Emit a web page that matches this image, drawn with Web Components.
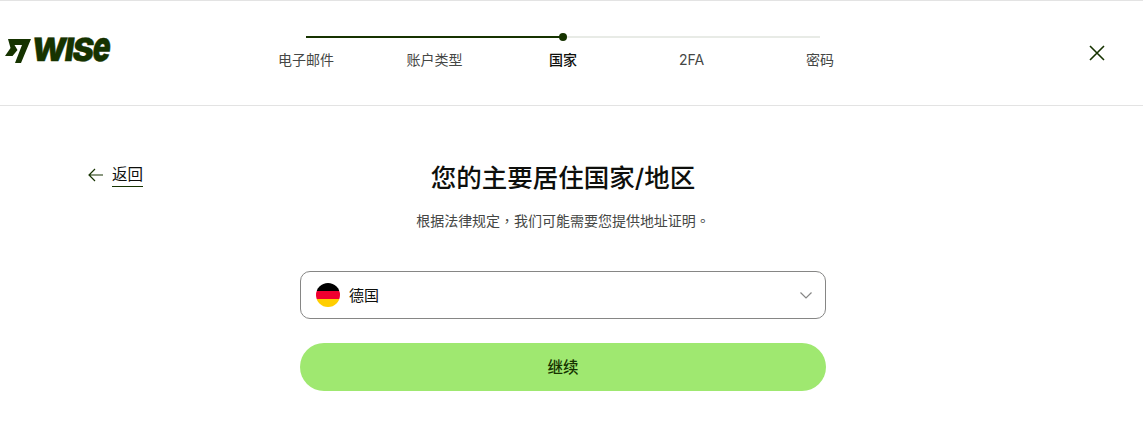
<!DOCTYPE html>
<html lang="zh-CN">
<head>
<meta charset="utf-8">
<title>Wise</title>
<style>
  html, body { margin: 0; background: #fff; }
  body {
    font-family: Inter, "Noto Sans CJK SC", sans-serif;
    color: #0e0f0c;
  }
</style>
</head>
<body>
<wise-page>
  <wise-header slot="header">
    <wise-stepper></wise-stepper>
  </wise-header>
  <back-link slot="back">返回</back-link>
  <h-title slot="title">您的主要居住国家/地区</h-title>
  <h-sub slot="sub" lang="zh-TW">根据法律规定，我们可能需要您提供地址证明。</h-sub>
  <country-select slot="form">德国</country-select>
  <green-button slot="form">继续</green-button>
</wise-page>

<script>
class WisePage extends HTMLElement {
  constructor() {
    super();
    this.attachShadow({ mode: 'open' }).innerHTML = `
      <style>
        :host { display: block; }
        .main {
          display: grid;
          grid-template-columns: 1fr 526px 1fr;
          padding: 55px 17px 48px 0;
        }
        .center { display: flex; flex-direction: column; align-items: center; }
        .form { width: 100%; display: flex; flex-direction: column; gap: 24px; margin-top: 39px; }
        .left { padding: 2px 0 0 88px; }
      </style>
      <slot name="header"></slot>
      <div class="main">
        <div class="left"><slot name="back"></slot></div>
        <div class="center">
          <slot name="title"></slot>
          <slot name="sub"></slot>
          <div class="form"><slot name="form"></slot></div>
        </div>
      </div>
    `;
  }
}

class WiseHeader extends HTMLElement {
  constructor() {
    super();
    this.attachShadow({ mode: 'open' }).innerHTML = `
      <style>
        :host {
          display: grid;
          grid-template-columns: 1fr 642.5px 1fr;
          height: 104px;
          padding-right: 17px;
          border-top: 1px solid #e3e3e3;
          border-bottom: 1px solid #e3e3e3;
        }
        .logo { display: flex; align-items: flex-start; gap: 1px; padding: 37px 0 0 5px; color: #163300; }
        .logo svg { flex: none; }
        .word {
          font: 900 32px/25px Inter, sans-serif;
          letter-spacing: -1.5px;
          height: 25px;
          display: flex;
          margin-top: -1px;
          transform: skewX(-8deg);
          -webkit-text-stroke: .4px #163300;
        }
        .word span { display: inline-block; transform-origin: 50% 100%; transform: scaleY(1.3) scaleX(.92); margin-left: -1px; }
        .close { display: flex; justify-content: flex-end; padding: 44px 21px 0 0; }
        .close svg { display: block; }
      </style>
      <div class="logo">
        <svg width="26" height="25" viewBox="0 0 26 25">
          <path fill="#163300" d="M3 1H26L16 25H10L17 7H9.5L12.5 12L7.5 18H0L5.5 10Z"/>
        </svg>
        <div class="word">WIS<span>e</span></div>
      </div>
      <slot></slot>
      <div class="close">
        <svg width="16" height="16" viewBox="0 0 16 16" fill="none" stroke="#163300" stroke-width="1.6">
          <path d="M1 1L15 15M15 1L1 15"/>
        </svg>
      </div>
    `;
  }
}

const STEPS = ['电子邮件', '账户类型', '国家', '2FA', '密码'];

class WiseStepper extends HTMLElement {
  constructor() {
    super();
    this.attachShadow({ mode: 'open' }).innerHTML = `
      <style>
        :host { display: block; padding-top: 35px; }
        .track {
          position: relative;
          height: 2px;
          margin: 0 64.25px;
          background: #e8ebe6;
        }
        .done { height: 2px; width: 50%; background: #163300; }
        .dot {
          position: absolute;
          left: 50%; top: 50%;
          width: 8px; height: 8px;
          margin: -4px 0 0 -4px;
          border-radius: 50%;
          background: #163300;
        }
        .labels {
          display: grid;
          grid-template-columns: repeat(5, 1fr);
          margin-top: 12px;
          font-size: 14px;
          line-height: 20px;
          color: #454745;
          text-align: center;
        }
        .on { color: #0e0f0c; font-weight: 500; }
      </style>
      <div class="track"><div class="done"></div><div class="dot"></div></div>
      <div class="labels">
        ${STEPS.map((s, i) => `<div class="${i === 2 ? 'on' : ''}">${s}</div>`).join('')}
      </div>
    `;
  }
}

class BackLink extends HTMLElement {
  constructor() {
    super();
    this.attachShadow({ mode: 'open' }).innerHTML = `
      <style>
        :host { display: inline-flex; align-items: center; gap: 9px; font-size: 15.5px; line-height: 22px; color: #163300; }
        span { display: block; border-bottom: 1px solid #163300; height: 22px; padding-top: 1px; color: #0e0f0c; }
        svg { display: block; }
      </style>
      <svg width="15" height="14" viewBox="0 0 15 14" fill="none" stroke="#163300" stroke-width="1.2">
        <path d="M15 7H1M7 1L1 7L7 13"/>
      </svg>
      <span><slot></slot></span>
    `;
  }
}

class HTitle extends HTMLElement {
  constructor() {
    super();
    this.attachShadow({ mode: 'open' }).innerHTML = `
      <style>
        :host { display: block; font-size: 25.5px; font-weight: 500; line-height: 34px; color: #0e0f0c; }
      </style>
      <slot></slot>
    `;
  }
}

class HSub extends HTMLElement {
  constructor() {
    super();
    this.attachShadow({ mode: 'open' }).innerHTML = `
      <style>
        :host {
          display: block;
          margin-top: 15px;
          font-family: Inter, "Noto Sans CJK TC", sans-serif;
          font-size: 14px;
          line-height: 22px;
          letter-spacing: -.02px;
          color: #454745;
        }
      </style>
      <slot></slot>
    `;
  }
}

class CountrySelect extends HTMLElement {
  constructor() {
    super();
    this.attachShadow({ mode: 'open' }).innerHTML = `
      <style>
        :host {
          display: flex;
          align-items: center;
          gap: 9px;
          box-sizing: border-box;
          height: 48px;
          padding: 0 13px 0 15px;
          border: 1px solid #868685;
          border-radius: 10px;
          font-size: 15px;
          color: #0e0f0c;
        }
        .flag { flex: none; display: block; }
        .name { flex: 1; margin-top: -2px; }
        .chev { display: block; }
      </style>
      <svg class="flag" width="24" height="24" viewBox="0 0 24 24">
        <defs><clipPath id="c"><circle cx="12" cy="12" r="12"/></clipPath></defs>
        <g clip-path="url(#c)">
          <rect width="24" height="8" fill="#000"/>
          <rect y="8" width="24" height="8" fill="#f0002f"/>
          <rect y="16" width="24" height="8" fill="#ffce00"/>
        </g>
      </svg>
      <div class="name"><slot></slot></div>
      <svg class="chev" width="12" height="7" viewBox="0 0 12 7" fill="none" stroke="#868685" stroke-width="1.2">
        <path d="M.5.5L6 6L11.5.5"/>
      </svg>
    `;
  }
}

class GreenButton extends HTMLElement {
  constructor() {
    super();
    this.attachShadow({ mode: 'open' }).innerHTML = `
      <style>
        :host {
          display: flex;
          align-items: center;
          justify-content: center;
          box-sizing: border-box;
          height: 48px;
          padding-bottom: 2px;
          border-radius: 24px;
          background: #9fe870;
          font-size: 15.5px;
          font-weight: 500;
          color: #163300;
        }
      </style>
      <slot></slot>
    `;
  }
}

customElements.define('wise-page', WisePage);
customElements.define('wise-header', WiseHeader);
customElements.define('wise-stepper', WiseStepper);
customElements.define('back-link', BackLink);
customElements.define('h-title', HTitle);
customElements.define('h-sub', HSub);
customElements.define('country-select', CountrySelect);
customElements.define('green-button', GreenButton);
</script>
</body>
</html>
